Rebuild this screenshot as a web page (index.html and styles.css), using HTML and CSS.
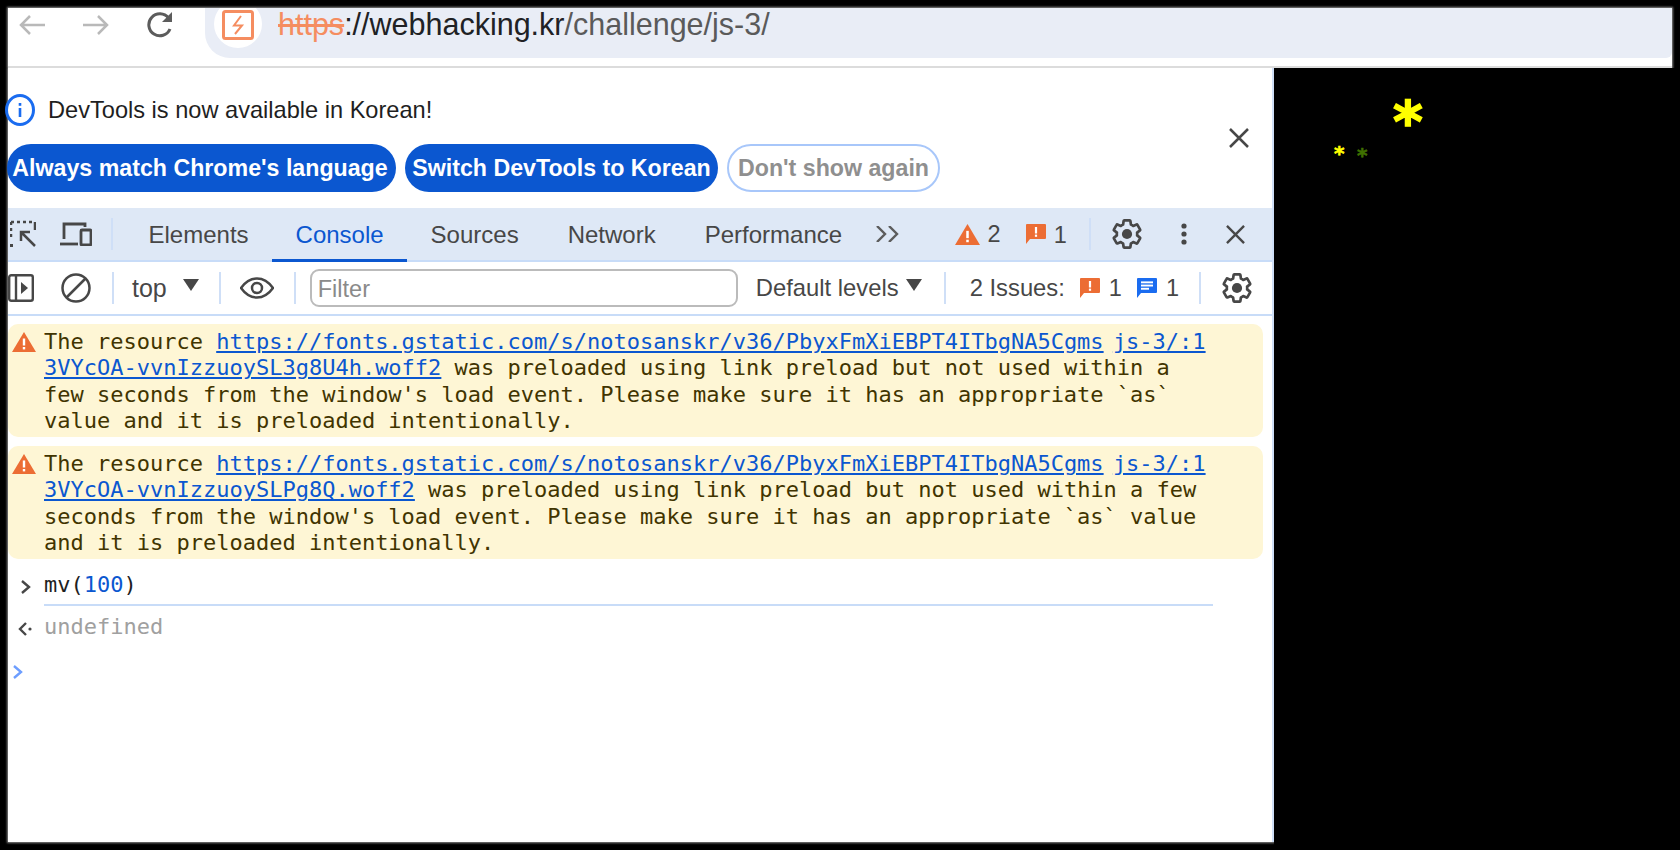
FILE: index.html
```html
<!DOCTYPE html>
<html lang="en">
<head>
<meta charset="utf-8">
<title>webhacking.kr js-3</title>
<link rel="stylesheet" href="styles.css">
</head>
<body>
<svg class="defs" width="0" height="0" aria-hidden="true">
  <symbol id="gear" viewBox="0 0 24 24">
    <path fill="none" stroke="currentColor" stroke-width="1.9" stroke-linejoin="round" d="M19.14 12.94c.04-.3.06-.61.06-.94 0-.32-.02-.64-.07-.94l2.03-1.58a.49.49 0 0 0 .12-.61l-1.92-3.32a.488.488 0 0 0-.59-.22l-2.39.96c-.5-.38-1.03-.7-1.62-.94l-.36-2.54a.484.484 0 0 0-.48-.41h-3.84c-.24 0-.43.17-.47.41l-.36 2.54c-.59.24-1.13.57-1.62.94l-2.39-.96c-.22-.08-.47 0-.59.22L2.74 8.87c-.12.21-.08.47.12.61l2.03 1.58c-.05.3-.09.63-.09.94s.02.64.07.94l-2.03 1.58a.49.49 0 0 0-.12.61l1.92 3.32c.12.22.37.29.59.22l2.39-.96c.5.38 1.03.7 1.62.94l.36 2.54c.05.24.24.41.48.41h3.84c.24 0 .44-.17.47-.41l.36-2.54c.59-.24 1.13-.56 1.62-.94l2.39.96c.22.08.47 0 .59-.22l1.92-3.32c.12-.22.07-.47-.12-.61l-2.01-1.58z"/>
    <circle cx="12" cy="12" r="3.6" fill="currentColor"/>
  </symbol>
  <symbol id="triangle" viewBox="0 0 24 20">
    <path fill="#ec6d34" d="M12 0 24 20H0z"/>
    <rect x="10.8" y="6.5" width="2.4" height="7" fill="#fff"/>
    <rect x="10.8" y="15" width="2.4" height="2.4" fill="#fff"/>
  </symbol>
  <symbol id="issue-orange" viewBox="0 0 20 20">
    <path fill="#ec6d34" d="M1 0h18a1 1 0 0 1 1 1v13a1 1 0 0 1-1 1H4l-4 5V1a1 1 0 0 1 1-1z"/>
    <rect x="8.9" y="3" width="2.2" height="6.5" fill="#fff"/>
    <rect x="8.9" y="10.6" width="2.2" height="2.2" fill="#fff"/>
  </symbol>
  <symbol id="issue-blue" viewBox="0 0 20 20">
    <path fill="#1a6cf0" d="M1 0h18a1 1 0 0 1 1 1v13a1 1 0 0 1-1 1H4l-4 5V1a1 1 0 0 1 1-1z"/>
    <rect x="4" y="3.4" width="12" height="1.9" fill="#fff"/>
    <rect x="4" y="6.6" width="12" height="1.9" fill="#fff"/>
    <rect x="4" y="9.8" width="8" height="1.9" fill="#fff"/>
  </symbol>
</svg>

<div class="window">
  <header class="chrome">
    <nav class="nav">
      <svg class="nav-icon" viewBox="0 0 26 20"><path d="M26 10H2M11 1 2 10l9 9"/></svg>
      <svg class="nav-icon" viewBox="0 0 26 20"><path d="M0 10h24M15 1l9 9-9 9"/></svg>
      <svg class="reload" viewBox="0 0 27 26"><path d="M23 17a11 11 0 1 1-1.5-11"/><path class="reload-head" d="M25 0v10H15z"/></svg>
    </nav>
    <div class="omnibox">
      <span class="site-chip">
        <svg class="site-icon" viewBox="0 0 32 30"><rect x="1.500" y="1.500" width="29" height="27" rx="2"/><path class="bolt" d="M19 6 12 15.500h8L13 24"/></svg>
      </span>
      <span class="url"><span class="scheme">https</span><span class="host">://webhacking.kr</span>/challenge/js-3/</span>
    </div>
  </header>

  <main class="content">
    <section class="devtools">
      <div class="infobar">
        <div class="infobar-main">
          <div class="infobar-title">
            <svg class="info-icon" viewBox="0 0 30 32"><ellipse cx="15" cy="16" rx="13.500" ry="14.500"/><rect class="info-mark" x="13.700" y="14" width="2.600" height="9"/><rect class="info-mark" x="13.700" y="9" width="2.600" height="2.800"/></svg>
            <span>DevTools is now available in Korean!</span>
          </div>
          <div class="infobar-actions">
            <button class="pill pill-primary pill-first">Always match Chrome's language</button>
            <button class="pill pill-primary pill-second">Switch DevTools to Korean</button>
            <button class="pill pill-outline">Don't show again</button>
          </div>
        </div>
        <svg class="close-icon" viewBox="0 0 20 20"><path d="M1 1l18 18M19 1 1 19"/></svg>
      </div>

      <div class="tabbar">
        <svg class="inspect-icon" viewBox="0 0 26 28"><path class="dash" d="M1 2h24M1 2v18"/><path d="M25 2v8"/><path class="arrow-stroke" d="M25 26 11 12M11 21v-9h9"/><rect class="dot" x="0" y="24" width="3" height="3"/></svg>
        <svg class="device-icon" viewBox="0 0 32 24"><path d="M4 17V2h21v3"/><path d="M0 22h18"/><rect x="21" y="8" width="10" height="15" rx="1"/></svg>
        <span class="sep sep-tab"></span>
        <div class="tabs">
          <span class="tab">Elements</span>
          <span class="tab tab-active">Console</span>
          <span class="tab">Sources</span>
          <span class="tab tab-spaced">Network</span>
          <span class="tab tab-spaced">Performance</span>
        </div>
        <svg class="more-icon" viewBox="0 0 24 16"><path d="M1 0l8 8-8 8M13 0l8 8-8 8"/></svg>
        <svg class="count-tri"><use href="#triangle"/></svg>
        <span class="count count-warn">2</span>
        <svg class="count-msg"><use href="#issue-orange"/></svg>
        <span class="count count-err">1</span>
        <span class="sep sep-right"></span>
        <svg class="gear gear-top"><use href="#gear"/></svg>
        <svg class="kebab" viewBox="0 0 6 22"><circle cx="3" cy="3" r="2.600"/><circle cx="3" cy="11" r="2.600"/><circle cx="3" cy="19" r="2.600"/></svg>
        <svg class="close-icon close-tab" viewBox="0 0 20 20"><path d="M1 1l18 18M19 1 1 19"/></svg>
      </div>

      <div class="toolbar">
        <svg class="sidebar-icon" viewBox="0 0 26 28"><rect x="1.200" y="1.200" width="23.600" height="25.600" rx="2"/><path d="M8 1v26"/><path class="solid" d="M13 8l7 6-7 6z"/></svg>
        <svg class="clear-icon" viewBox="0 0 30 30"><circle cx="15" cy="15" r="13.500"/><path d="M25 5 5 25"/></svg>
        <span class="sep sep-a"></span>
        <span class="ctx">top</span>
        <span class="caret caret-top"></span>
        <span class="sep sep-b"></span>
        <svg class="eye-icon" viewBox="0 0 34 22"><path d="M1 11C6 4 11 1.500 17 1.500S28 4 33 11c-5 7-10 9.500-16 9.500S6 18 1 11z"/><circle cx="17" cy="11" r="5"/></svg>
        <span class="sep sep-c"></span>
        <input class="filter" type="text" placeholder="Filter">
        <span class="levels">Default levels</span>
        <span class="caret caret-levels"></span>
        <span class="sep sep-d"></span>
        <span class="issues">2 Issues:</span>
        <svg class="issue-icon issue-icon-a"><use href="#issue-orange"/></svg>
        <span class="count count-issue">1</span>
        <svg class="issue-icon issue-icon-b"><use href="#issue-blue"/></svg>
        <span class="count count-issue">1</span>
        <span class="sep sep-e"></span>
        <svg class="gear gear-bottom"><use href="#gear"/></svg>
      </div>

      <div class="console">
        <div class="warning">
          <svg class="warn-icon"><use href="#triangle"/></svg>
          <pre class="message">The resource <a class="link">https://fonts.gstatic.com/s/notosanskr/v36/PbyxFmXiEBPT4ITbgNA5Cgms</a> <a class="link link-src">js-3/:1</a>
<a class="link">3VYcOA-vvnIzzuoySL3g8U4h.woff2</a> was preloaded using link preload but not used within a
few seconds from the window's load event. Please make sure it has an appropriate `as`
value and it is preloaded intentionally.</pre>
        </div>
        <div class="warning">
          <svg class="warn-icon"><use href="#triangle"/></svg>
          <pre class="message">The resource <a class="link">https://fonts.gstatic.com/s/notosanskr/v36/PbyxFmXiEBPT4ITbgNA5Cgms</a> <a class="link link-src">js-3/:1</a>
<a class="link">3VYcOA-vvnIzzuoySLPg8Q.woff2</a> was preloaded using link preload but not used within a few
seconds from the window's load event. Please make sure it has an appropriate `as` value
and it is preloaded intentionally.</pre>
        </div>
        <div class="entry entry-input">
          <svg class="prompt-icon" viewBox="0 0 10 14"><path d="M1 1l7 6-7 6"/></svg>
          <div class="entry-code">mv(<span class="num">100</span>)</div>
        </div>
        <div class="entry entry-result">
          <svg class="result-icon" viewBox="0 0 14 14"><path d="M8 1 2 7l6 6"/><circle cx="12" cy="7" r="1.600"/></svg>
          <div class="entry-value">undefined</div>
        </div>
        <svg class="caret-prompt" viewBox="0 0 10 14"><path d="M1 1l7 6-7 6"/></svg>
      </div>
    </section>

    <section class="page">
      <span class="star star-big">*</span>
      <span class="star star-small">*</span>
      <span class="star star-green">*</span>
    </section>
  </main>
</div>
</body>
</html>
```

FILE: styles.css
```css
* { box-sizing: border-box; }
html, body { margin: 0; height: 100%; }
body {
  background: #000;
  padding: 8px;
  overflow: hidden;
  font-family: "Liberation Sans", Arial, sans-serif;
  color: #474747;
}
.defs { position: absolute; }
svg { display: block; flex: none; }

.window {
  height: 834px;
  background: #000;
  display: flex;
  flex-direction: column;
}

/* browser chrome */
.chrome {
  display: flex;
  height: 60px;
  flex: none;
  padding-left: 11px;
  border-bottom: 2px solid #dcdcdc;
  padding-bottom: 8px;
  background: #fff;
  box-shadow: 0 0 2px 1px #8d8d8d;
  clip-path: inset(-3px -3px 0 -3px);
}
.nav {
  display: flex;
  align-items: flex-start;
  gap: 38px;
  width: 186px;
  padding-top: 7px;
}
.nav-icon { width: 26px; height: 20px; fill: none; stroke: #b9b9b9; stroke-width: 2.500; }
.reload { width: 27px; height: 26px; margin-top: -3px; fill: none; stroke: #5c5c5c; stroke-width: 3; }
.reload-head { fill: #5c5c5c; stroke: none; }
.omnibox {
  flex: 1;
  display: flex;
  align-items: flex-start;
  background: #e9edf6;
  border-radius: 0 0 6px 25px;
  padding-left: 9px;
}
.site-chip {
  width: 48px;
  height: 48px;
  margin-top: -8px;
  border-radius: 50%;
  background: #fff;
  clip-path: inset(8px 0 0 0);
  display: flex;
  align-items: center;
  justify-content: center;
  flex: none;
}
.site-icon { width: 32px; height: 30px; margin-top: 2px; fill: none; stroke: #f58d60; stroke-width: 3; }
.bolt { stroke-width: 2; }
.url {
  margin-left: 16px;
  font-size: 30.500px;
  line-height: 32px;
  color: #5a5a5a;
  white-space: nowrap;
}
.scheme { color: #f58d60; text-decoration: line-through; }
.host { color: #202124; }

/* layout */
.content { flex: 1; display: flex; min-height: 0; }
.devtools {
  width: 1266px;
  flex: none;
  display: flex;
  flex-direction: column;
  border-right: 2px solid #cfdff7;
  background: #fff;
  box-shadow: 0 0 2px 1px #8d8d8d;
  clip-path: inset(0 0 -3px -3px);
}
.page { flex: 1; background: #000; position: relative; }
.star { position: absolute; font-family: "DejaVu Sans", sans-serif; font-weight: 700; line-height: 1; color: #ffff00; }
.star-big { left: 119px; top: 26px; font-size: 57px; -webkit-text-stroke: 1.500px #ffff00; }
.star-small { left: 60px; top: 75px; font-size: 20px; -webkit-text-stroke: 0.600px #ffff00; }
.star-green { left: 83px; top: 77px; font-size: 20px; color: #3f7000; -webkit-text-stroke: 0.600px #3f7000; }

/* infobar */
.infobar {
  height: 140px;
  flex: none;
  display: flex;
  align-items: center;
  justify-content: space-between;
  padding-right: 23px;
}
.infobar-main { display: flex; flex-direction: column; gap: 18px; margin-top: 10px; }
.infobar-title {
  display: flex;
  align-items: center;
  height: 32px;
  font-size: 23.600px;
  color: #1f1f1f;
}
.info-icon { width: 30px; height: 32px; margin-left: -3px; margin-right: 13px; fill: none; stroke: #1a6cf0; stroke-width: 3; }
.info-mark { fill: #1a6cf0; stroke: none; }
.infobar-actions { display: flex; gap: 9px; margin-left: -1px; }
.pill {
  height: 48px;
  border-radius: 24px;
  border: 0;
  font-family: inherit;
  font-weight: 700;
  font-size: 23.200px;
  padding: 0;
  white-space: nowrap;
}
.pill-primary { background: #0b57d0; color: #fff; }
.pill-first { width: 389px; padding-right: 3px; }
.pill-second { width: 313px; }
.pill-outline { width: 213px; background: #fff; color: #8f8f8f; border: 2px solid #a8c7fa; }
.close-icon { width: 20px; height: 20px; fill: none; stroke: #474747; stroke-width: 2.500; }

/* tab bar */
.tabbar {
  height: 54px;
  flex: none;
  display: flex;
  align-items: center;
  background: #dee8f6;
  border-bottom: 2px solid #c8dcf8;
  padding-left: 2px;
}
.inspect-icon { width: 26px; height: 28px; fill: none; stroke: #474747; stroke-width: 2.500; }
.dash { stroke-dasharray: 3 3; }
.dot { fill: #474747; stroke: none; }
.device-icon { width: 32px; height: 24px; margin-left: 24px; fill: none; stroke: #474747; stroke-width: 2.800; }
.sep { width: 2px; height: 32px; background: #cfdff7; flex: none; }
.sep-tab { margin-left: 19px; }
.tabs { display: flex; margin-left: 12px; align-self: stretch; }
.tab {
  display: flex;
  align-items: center;
  padding: 3px 23.500px 0;
  font-size: 24px;
  margin-bottom: -2px;
  border-bottom: 3px solid transparent;
  white-space: nowrap;
}
.tab-spaced { margin-left: 2px; }
.tab-active { color: #0b57d0; border-bottom-color: #0b57d0; }
.more-icon { width: 24px; height: 16px; margin-left: 10px; fill: none; stroke: #5c5c5c; stroke-width: 2.400; }
.count-tri { width: 25px; height: 21px; margin-left: 55px; }
.count { font-size: 23.500px; }
.count-warn { margin-left: 8px; }
.count-msg { width: 20px; height: 20px; margin-left: 25px; }
.count-err { margin-left: 8px; margin-top: 3px; }
.sep-right { margin-left: 22px; }
.gear { width: 34px; height: 34px; color: #474747; }
.gear-top { margin-left: 19px; }
.kebab { width: 6px; height: 22px; margin-left: 37px; fill: #474747; }
.close-tab { margin-left: 39px; width: 19px; height: 19px; }

/* console toolbar */
.toolbar {
  height: 54px;
  flex: none;
  display: flex;
  align-items: center;
  border-bottom: 2px solid #c8dcf8;
  font-size: 23.800px;
  background: #fff;
}
.sidebar-icon { width: 26px; height: 28px; fill: none; stroke: #474747; stroke-width: 2.400; }
.solid { fill: #474747; stroke: none; }
.clear-icon { width: 30px; height: 30px; margin-left: 27px; fill: none; stroke: #474747; stroke-width: 2.500; }
.sep-a { margin-left: 21px; }
.ctx { margin-left: 18px; font-size: 25px; }
.caret { width: 0; height: 0; border-left: 8px solid transparent; border-right: 8px solid transparent; border-top: 12px solid #474747; flex: none; }
.caret-top { margin-left: 16px; margin-top: -6px; }
.sep-b { margin-left: 20px; }
.eye-icon { width: 34px; height: 22px; margin-left: 19px; fill: none; stroke: #474747; stroke-width: 2.500; }
.sep-c { margin-left: 20px; }
.filter {
  width: 428px;
  height: 38px;
  margin-left: 14px;
  border: 2px solid #bbbbbb;
  border-radius: 9px;
  padding: 2px 6px 0;
  font-family: inherit;
  font-size: 23.500px;
  color: #474747;
  outline: none;
  background: #fff;
}
.filter::placeholder { color: #8a8a8a; opacity: 1; }
.levels { margin-left: 18px; white-space: nowrap; }
.caret-levels { margin-left: 7px; margin-top: -6px; }
.sep-d { margin-left: 22px; }
.issues { margin-left: 24px; white-space: nowrap; }
.issue-icon { width: 20px; height: 20px; }
.issue-icon-a { margin-left: 15px; }
.issue-icon-b { margin-left: 15px; }
.count-issue { margin-left: 9px; }
.sep-e { margin-left: 20px; }
.gear-bottom { margin-left: 19px; }

/* console messages */
.console { flex: 1; padding-top: 8px; font-family: "DejaVu Sans Mono", "Liberation Mono", monospace; font-size: 22px; }
.warning {
  position: relative;
  margin: 0 9px 9px 0;
  background: #fef6d5;
  border-radius: 10px;
  padding: 5px 0 3px 36px;
  color: #413400;
}
.warning:last-of-type { margin-bottom: 0; }
.warn-icon { position: absolute; left: 4px; top: 8px; width: 24px; height: 20px; }
.message { margin: 0; font: inherit; line-height: 26.300px; white-space: pre; }
.link { color: #0b57d0; text-decoration: underline; }
.link-src { margin-left: -4px; }
.entry { position: relative; padding-left: 36px; line-height: 26px; color: #1f1f1f; }
.entry-input { padding-top: 4px; }
.entry-code { padding-bottom: 6px; margin-right: 59px; border-bottom: 2px solid #c8dcf8; }
.num { color: #0b57d0; }
.prompt-icon { position: absolute; left: 13px; top: 12px; width: 10px; height: 14px; fill: none; stroke: #474747; stroke-width: 2.400; }
.entry-result { padding-top: 8px; }
.entry-value { color: #a0a0a0; }
.result-icon { position: absolute; left: 10px; top: 16px; width: 14px; height: 14px; fill: none; stroke: #474747; stroke-width: 2.400; }
.result-icon circle { fill: #474747; stroke: none; }
.caret-prompt { width: 10px; height: 14px; margin: 25px 0 0 5px; fill: none; stroke: #6d9eff; stroke-width: 2.400; }
```
